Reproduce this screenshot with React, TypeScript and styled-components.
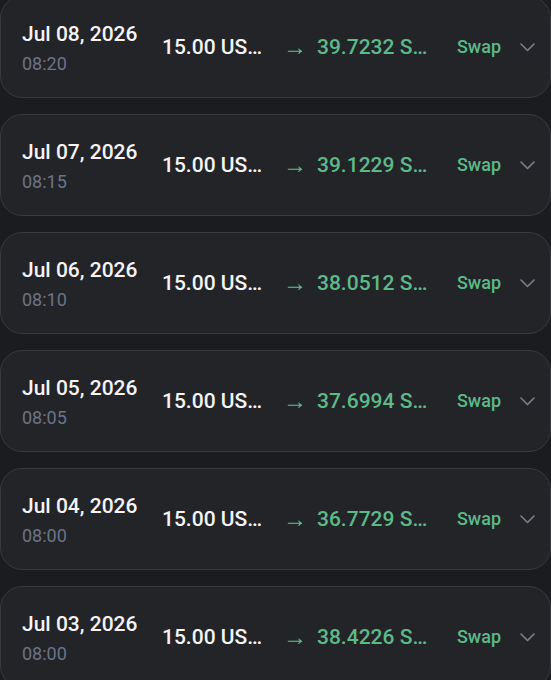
import React from "react";
import styled, { createGlobalStyle } from "styled-components";

const Global = createGlobalStyle`
  html, body {
    margin: 0;
    padding: 0;
    background: #1b1c20;
    font-family: Roboto, "Noto Sans", "Liberation Sans", sans-serif;
    overflow: hidden;
  }
`;

const List = styled.div`
  display: flex;
  flex-direction: column;
  gap: 16px;
  margin-top: -4px;
  width: 551px;
`;

const Card = styled.div`
  box-sizing: border-box;
  height: 102px;
  border: 1px solid #38393f;
  border-radius: 22px;
  background: #232428;
  display: flex;
  align-items: center;
  padding: 0 15px 0 21px;
`;

const DateCol = styled.div`
  width: 140px;
  flex: none;
  display: flex;
  flex-direction: column;
  margin-top: 2px;
`;

const DateText = styled.div`
  color: #f4f4f6;
  font-size: 21px;
  font-weight: 500;
  line-height: 26px;
`;

const TimeText = styled.div`
  color: #6c7386;
  font-size: 18px;
  font-weight: 400;
  line-height: 22px;
  margin-top: 6px;
`;

const Amount = styled.div<{ $green?: boolean; $w: number }>`
  flex: none;
  width: ${(p) => p.$w}px;
  white-space: nowrap;
  overflow: hidden;
  text-overflow: ellipsis;
  font-size: 21px;
  font-weight: 500;
  line-height: 26px;
  color: ${(p) => (p.$green ? "#5cba89" : "#f4f4f6")};
`;

const Arrow = styled.div`
  flex: none;
  width: 14px;
  color: #5cba89;
  font-size: 24px;
  line-height: 26px;
  margin: 0 15px 0 22px;
  display: flex;
  justify-content: center;
`;

const Kind = styled.div`
  flex: none;
  margin-left: auto;
  color: #5cba89;
  font-size: 18px;
  font-weight: 500;
  line-height: 22px;
`;

const Chevron = styled.svg`
  flex: none;
  margin-left: 19px;
  width: 15px;
  height: 9px;
`;

const rows = [
  { d: "Jul 08, 2026", t: "08:20", out: "39.7232 SOL" },
  { d: "Jul 07, 2026", t: "08:15", out: "39.1229 SOL" },
  { d: "Jul 06, 2026", t: "08:10", out: "38.0512 SOL" },
  { d: "Jul 05, 2026", t: "08:05", out: "37.6994 SOL" },
  { d: "Jul 04, 2026", t: "08:00", out: "36.7729 SOL" },
  { d: "Jul 03, 2026", t: "08:00", out: "38.4226 SOL" },
];

export default function App() {
  return (
    <>
      <Global />
      <List>
        {rows.map((r) => (
          <Card key={r.d}>
            <DateCol>
              <DateText>{r.d}</DateText>
              <TimeText>{r.t}</TimeText>
            </DateCol>
            <Amount $w={104}>15.00 USDT</Amount>
            <Arrow>→</Arrow>
            <Amount $green $w={116}>{r.out}</Amount>
            <Kind>Swap</Kind>
            <Chevron viewBox="0 0 15 9" fill="none">
              <path d="M1 1l6.5 6.5L14 1" stroke="#7b7f8f" strokeWidth="1.6" strokeLinecap="round" strokeLinejoin="round" />
            </Chevron>
          </Card>
        ))}
      </List>
    </>
  );
}
